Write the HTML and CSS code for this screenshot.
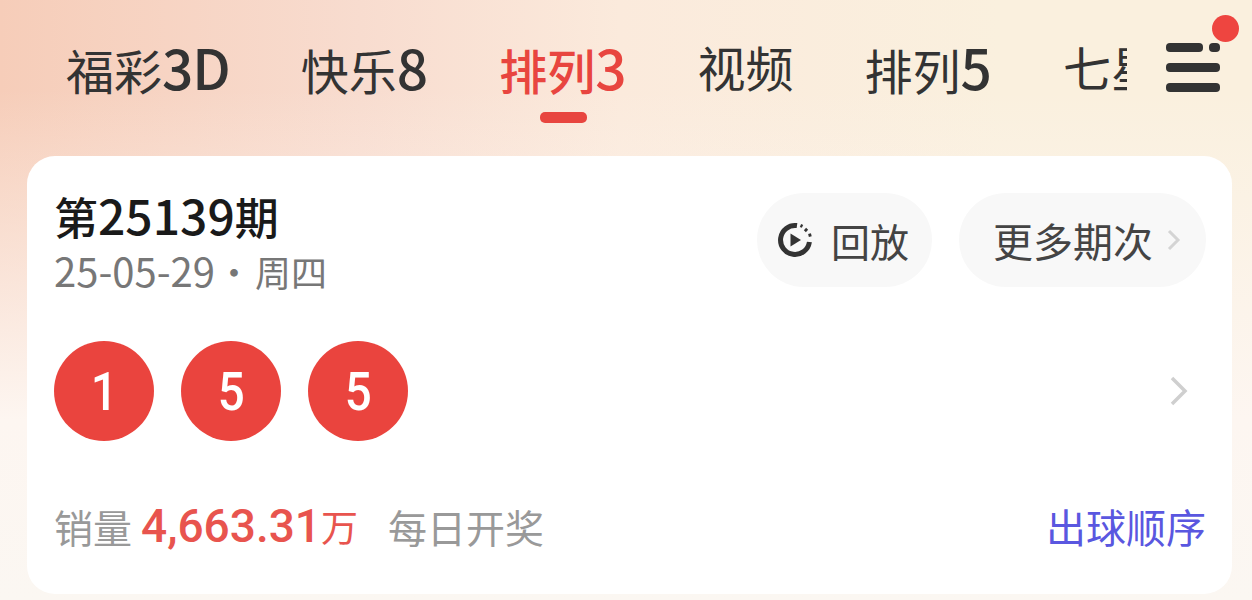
FILE: index.html
```html
<!DOCTYPE html>
<html lang="zh-CN">
<head>
<meta charset="utf-8">
<title>排列3</title>
<link rel="stylesheet" href="styles.css">
</head>
<body>
<div class="page">
  <header class="nav">
    <div class="tabs">
      <a class="tab">福彩<span class="num tight">3D</span></a>
      <a class="tab">快乐<span class="num">8</span></a>
      <a class="tab active">排列<span class="num">3</span></a>
      <a class="tab">视频</a>
      <a class="tab">排列<span class="num">5</span></a>
      <a class="tab">七星彩</a>
    </div>
    <div class="menu">
      <span class="dot"></span>
      <svg width="56" height="50" viewBox="0 0 56 50"><g fill="#333"><rect x="1" y="0" width="37" height="9" rx="4"/><rect x="44" y="0" width="11" height="9" rx="4"/><rect x="1" y="20" width="54" height="9" rx="4"/><rect x="1" y="40" width="54" height="9" rx="4"/></g></svg>
    </div>
  </header>
  <main class="card">
    <div class="head">
      <div class="info">
        <div class="issue">第<span class="issue-num">25139</span>期</div>
        <div class="date"><span class="date-num">25-05-29</span><span class="sep">·</span>周四</div>
      </div>
      <div class="actions">
        <a class="pill replay">
          <svg width="36" height="36" viewBox="0 0 36 36"><path d="M20 3.600A14.500 14.500 0 1 0 32.400 20" fill="none" stroke="#333" stroke-width="5"/><path d="M13.500 11.500v13l10.500-6.500z" fill="#333"/><g fill="none" stroke="#333" stroke-width="3.200"><path d="M23.500 3.500l2 .9"/><path d="M28 7l2 2"/><path d="M31.500 13.500l2.800-.7"/></g></svg>
          <span>回放</span>
        </a>
        <a class="pill more">
          <span>更多期次</span>
          <svg width="14" height="24" viewBox="0 0 14 24"><path d="M2 3l9 9-9 9" fill="none" stroke="#d4d4d4" stroke-width="3"/></svg>
        </a>
      </div>
    </div>
    <div class="balls">
      <span class="ball"><span class="ball-num">1</span></span>
      <span class="ball"><span class="ball-num">5</span></span>
      <span class="ball"><span class="ball-num">5</span></span>
      <svg class="chev" width="20" height="32" viewBox="0 0 20 32"><path d="M3 3l13 13-13 13" fill="none" stroke="#cfcfcf" stroke-width="3.500"/></svg>
    </div>
    <div class="foot">
      <div class="sales">
        <span class="label">销量</span>
        <span class="amount">4,663.31</span><span class="unit">万</span>
        <span class="label freq">每日开奖</span>
      </div>
      <a class="order">出球顺序</a>
    </div>
  </main>
</div>
</body>
</html>
```
FILE: styles.css
```css
* { box-sizing: border-box; }
html, body { margin: 0; padding: 0; }
body {
  font-family: "Noto Sans CJK SC", "Noto Sans", sans-serif;
  width: 1252px;
  height: 600px;
  overflow: hidden;
}
.page {
  width: 1252px;
  height: 600px;
  background:
    linear-gradient(180deg, rgba(255,255,255,0) 0, rgba(255,255,255,0) 90px, #fdf6f1 420px, #fbf7f2 600px),
    linear-gradient(90deg, #f6cdb9 0, #f8dccf 360px, #fbeadc 620px, #faf0de 1000px, #faf0de 1252px);
  padding: 0 20px 6px 27px;
  display: flex;
  flex-direction: column;
}
.nav {
  height: 156px;
  display: flex;
  flex-shrink: 0;
}
.tabs {
  width: 1100px;
  display: flex;
  gap: 71px;
  padding: 36px 0 0 39px;
  overflow: hidden;
  white-space: nowrap;
}
.tab {
  font-size: 48px;
  line-height: 60px;
  color: #333;
  height: 90px;
  flex-shrink: 0;
  position: relative;
}
.num {
  font-size: 55px;
  line-height: 60px;
  font-weight: 500;
}
.num.tight { letter-spacing: -1px; }
.tab.active { color: #e8453f; font-weight: 500; }
.tab.active::after {
  content: "";
  position: absolute;
  left: 41px;
  top: 76px;
  width: 47px;
  height: 11px;
  border-radius: 5px;
  background: #e8453f;
}
.menu {
  position: relative;
  padding: 43px 0 0 38px;
}
.dot {
  position: absolute;
  left: 85px;
  top: 15px;
  width: 27px;
  height: 27px;
  border-radius: 50%;
  background: #ee4540;
}
.menu svg { display: block; }
.card {
  width: 1205px;
  height: 438px;
  background: #fff;
  border-radius: 28px;
  display: flex;
  flex-direction: column;
  padding: 30px 26px 0 27px;
}
.head {
  display: flex;
  justify-content: space-between;
}
.issue {
  font-size: 44px;
  line-height: 56px;
  color: #1a1a1a;
  font-weight: 500;
}
.issue-num { font-size: 48px; line-height: 56px; }
.date {
  font-size: 36px;
  line-height: 44px;
  color: #777;
  margin-top: 4px;
}
.date-num { font-size: 40px; line-height: 44px; }
.sep { margin: 0 3px 0 1px; }
.actions {
  display: flex;
  gap: 27px;
  padding-top: 7px;
}
.pill {
  height: 94px;
  border-radius: 47px;
  background: #f8f8f8;
  display: flex;
  align-items: center;
  font-size: 39px;
  color: #444;
}
.replay { width: 175px; padding-left: 20px; gap: 18px; }
.more { width: 247px; padding-left: 34px; gap: 14px; font-size: 40px; }
.balls {
  display: flex;
  align-items: center;
  gap: 27px;
  margin-top: 48px;
}
.ball {
  width: 100px;
  height: 100px;
  border-radius: 50%;
  background: #ea443e;
  color: #fff;
  display: flex;
  align-items: center;
  justify-content: center;
}
.ball-num {
  font-family: "Roboto", sans-serif;
  font-weight: 500;
  font-size: 54px;
  transform: scaleX(0.88);
}
.chev {
  margin-left: auto;
  margin-right: 17px;
}
.foot {
  display: flex;
  justify-content: space-between;
  align-items: center;
  margin-top: 55px;
  height: 60px;
}
.sales {
  display: flex;
  align-items: center;
}
.label {
  font-size: 39px;
  color: #999;
}
.amount {
  font-family: "Roboto", sans-serif;
  font-size: 46px;
  font-weight: 500;
  color: #e8544e;
  margin-left: 9px;
}
.unit {
  font-size: 37px;
  color: #e8544e;
}
.freq { margin-left: 30px; }
.order {
  font-size: 40px;
  color: #5a57e0;
}
```
